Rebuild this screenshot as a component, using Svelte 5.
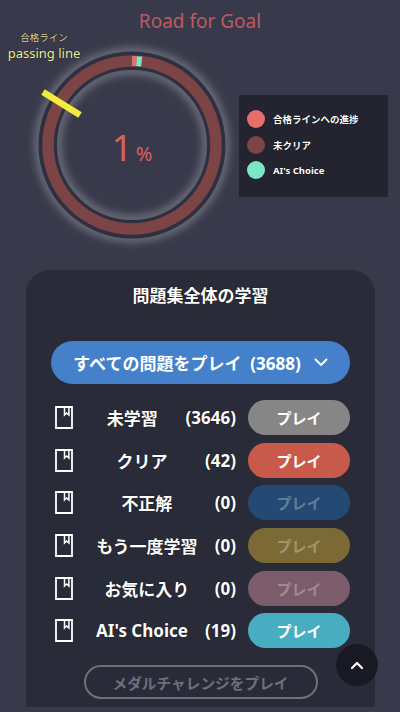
<script>
  // Progress ring geometry
  const radius = 84;
  const circumference = 2 * Math.PI * radius;
  const progress = 4.6;
  const aiChoice = 5.2;

  const legend = [
    { label: '合格ラインへの進捗', color: '#e66e6b' },
    { label: '未クリア', color: '#7d4446' },
    { label: "AI's Choice", color: '#7de6c6' }
  ];

  const rows = [
    { label: '未学習', count: 3646, kind: 'gray' },
    { label: 'クリア', count: 42, kind: 'red' },
    { label: '不正解', count: 0, kind: 'navy' },
    { label: 'もう一度学習', count: 0, kind: 'olive' },
    { label: 'お気に入り', count: 0, kind: 'mauve' },
    { label: "AI's Choice", count: 19, kind: 'teal' }
  ];
</script>

<div class="page">
  <h1>Road for Goal</h1>

  <section class="goal">
    <div class="ring-wrap">
      <svg class="ring" width="260" height="260" viewBox="-130 -130 260 260" aria-hidden="true">
        <defs>
          <filter id="glow" x="-30%" y="-30%" width="160%" height="160%">
            <feGaussianBlur stdDeviation="5" />
          </filter>
        </defs>
        <circle r="93" class="halo" filter="url(#glow)" />
        <circle r="75" class="halo" filter="url(#glow)" />
        <circle r="84.25" class="track-bg" />
        <circle r={radius} class="track" />
        <g transform="rotate(-90)">
          <circle r={radius} class="seg" stroke="#e66e6b" stroke-dasharray="{progress} {circumference}" />
          <circle
            r={radius}
            class="seg"
            stroke="#7de6c6"
            stroke-dasharray="{aiChoice} {circumference}"
            stroke-dashoffset={-progress}
          />
        </g>
        <line x1="-89" y1="-53" x2="-52" y2="-30" class="tick" />
      </svg>
      <div class="percent"><span class="num">1</span><span class="unit">%</span></div>
    </div>

    <div class="passing">
      <span class="ja">合格ライン</span>
      <span class="en">passing line</span>
    </div>

    <ul class="legend">
      {#each legend as item}
        <li><i style="background: {item.color}"></i>{item.label}</li>
      {/each}
    </ul>
  </section>

  <section class="card">
    <h2>問題集全体の学習</h2>

    <button class="play-all">
      <span>すべての問題をプレイ&nbsp; (3688)</span>
      <svg width="14" height="9" viewBox="0 0 14 9" aria-hidden="true">
        <path d="M1.5 1.5 7 7l5.5-5.5" fill="none" stroke="#fff" stroke-width="2" stroke-linecap="round" stroke-linejoin="round" />
      </svg>
    </button>

    <div class="rows">
      {#each rows as row}
        <div class="row">
          <svg class="book" width="18" height="23" viewBox="0 0 18 23" aria-hidden="true">
            <path d="M1 1h16v21H1z" fill="none" stroke="#fff" stroke-width="1.8" />
            <path d="M9.5 1v8l2.2-2 2.2 2V1" fill="none" stroke="#fff" stroke-width="1.5" />
          </svg>
          <span class="label">{row.label}</span>
          <span class="count">({row.count})</span>
          <button class="play {row.kind}" class:off={row.count === 0}>プレイ</button>
        </div>
      {/each}
    </div>

    <button class="medal">メダルチャレンジをプレイ</button>
  </section>

  <button class="to-top" aria-label="ページ上部へ">
    <svg width="14" height="9" viewBox="0 0 14 9" aria-hidden="true">
      <path d="M2 7l5-5 5 5" fill="none" stroke="#fff" stroke-width="2.2" stroke-linecap="round" stroke-linejoin="round" />
    </svg>
  </button>
</div>

<style>
  :global(body) {
    margin: 0;
    background: #383a4b;
  }

  .page {
    position: relative;
    width: 400px;
    height: 712px;
    overflow: hidden;
    background: #383a4b;
    color: #fff;
    font-family: 'Noto Sans', 'Noto Sans CJK JP', sans-serif;
  }

  h1 {
    margin: 0;
    padding-top: 8px;
    height: 44px;
    box-sizing: border-box;
    text-align: center;
    font-size: 19px;
    line-height: 27px;
    font-weight: 400;
    color: #bd5a60;
  }

  .goal {
    position: relative;
    display: flex;
    align-items: flex-start;
    height: 226px;
    padding-left: 39px;
  }

  .ring-wrap {
    position: relative;
    flex: none;
    width: 186px;
    height: 186px;
    margin-top: 8px;
  }

  .ring {
    position: absolute;
    left: -37px;
    top: -37px;
  }

  .halo {
    fill: none;
    stroke: rgba(255, 255, 255, 0.6);
    stroke-width: 4;
  }

  .track-bg {
    fill: none;
    stroke: #2e2f41;
    stroke-width: 18.5;
  }

  .track {
    fill: none;
    stroke: #7d4446;
    stroke-width: 11.5;
  }

  .seg {
    fill: none;
    stroke-width: 10;
  }

  .tick {
    stroke: #f3ec3f;
    stroke-width: 6.5;
  }

  .percent {
    position: absolute;
    inset: 0;
    display: flex;
    align-items: baseline;
    justify-content: center;
    padding-top: 70px;
    box-sizing: border-box;
    color: #d9605f;
  }

  .num {
    font-size: 37px;
    line-height: 50px;
  }

  .unit {
    font-size: 20px;
    margin-left: 3px;
  }

  .passing {
    position: absolute;
    left: 0;
    top: -13px;
    width: 88px;
    display: flex;
    flex-direction: column;
    align-items: center;
    color: #eef092;
    text-shadow: 0 0 1px #000;
  }

  .passing .ja {
    font-size: 9.5px;
    line-height: 14px;
    color: #dcdca0;
  }

  .passing .en {
    font-size: 13px;
    line-height: 17px;
  }

  .legend {
    position: relative;
    list-style: none;
    box-sizing: border-box;
    width: 149px;
    height: 102px;
    margin: 51px 0 0 14px;
    padding: 15px 0 0 8px;
    display: flex;
    flex-direction: column;
    gap: 7.5px;
    background: #23242f;
    font-size: 9.5px;
    font-weight: 700;
  }

  .legend li {
    display: flex;
    align-items: center;
    gap: 8px;
    height: 18px;
    text-shadow: 0 0 1px #000;
  }

  .legend i {
    flex: none;
    width: 18px;
    height: 18px;
    border-radius: 50%;
  }

  .card {
    box-sizing: border-box;
    width: 349px;
    height: 437px;
    margin-left: 26px;
    padding: 0 25px;
    border-radius: 24px 24px 0 0;
    background: #2a2b39;
  }

  h2 {
    margin: 0;
    padding-top: 14px;
    height: 71px;
    box-sizing: border-box;
    text-align: center;
    font-size: 17px;
    line-height: 24px;
    font-weight: 700;
    text-shadow: 0 0 1px #000;
  }

  button {
    font-family: inherit;
    border: none;
    padding: 0;
    color: #fff;
  }

  .play-all {
    display: flex;
    align-items: center;
    justify-content: center;
    gap: 13px;
    width: 299px;
    height: 43px;
    border-radius: 22px;
    background: #4580ca;
    font-size: 17px;
    font-weight: 700;
  }

  .rows {
    display: flex;
    flex-direction: column;
    gap: 7.7px;
    margin-top: 16px;
  }

  .row {
    display: flex;
    align-items: center;
    height: 35px;
    padding-left: 4px;
    font-size: 17px;
    font-weight: 700;
    text-shadow: 0 0 1px #000;
  }

  .book {
    flex: none;
    margin-right: 6px;
  }

  .label {
    flex: 1;
    text-align: center;
    white-space: nowrap;
  }

  .count {
    flex: none;
    margin-right: 12px;
  }

  .play {
    flex: none;
    width: 102px;
    height: 35px;
    border-radius: 18px;
    font-size: 15px;
    font-weight: 700;
  }

  .play.off {
    color: rgba(255, 255, 255, 0.3);
  }

  .gray { background: #868686; }
  .red { background: #c85a4b; }
  .navy { background: #244a73; }
  .olive { background: #7b6a35; }
  .mauve { background: #7c5b6b; }
  .teal { background: #48adc0; }

  .medal {
    display: block;
    box-sizing: border-box;
    width: 234px;
    height: 34px;
    margin: 17px auto 0;
    border-radius: 17px;
    border: 2px solid #6f707c;
    background: transparent;
    color: #6f707c;
    font-size: 14.7px;
    font-weight: 700;
  }

  .to-top {
    position: absolute;
    left: 336px;
    top: 644px;
    width: 42px;
    height: 42px;
    border-radius: 50%;
    background: #181923;
    display: flex;
    align-items: center;
    justify-content: center;
  }
</style>
